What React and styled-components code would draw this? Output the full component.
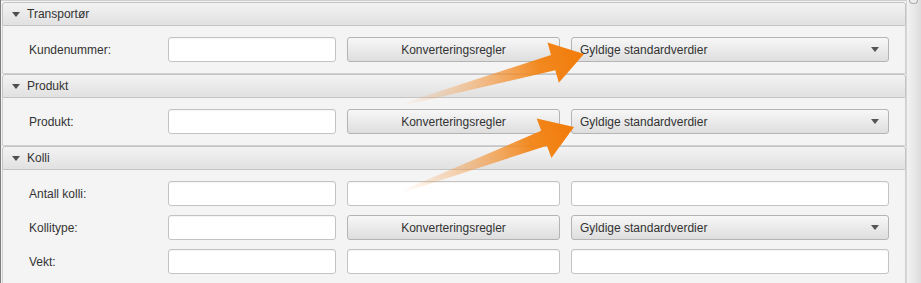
import React from 'react';
import styled, { createGlobalStyle } from 'styled-components';

const Global = createGlobalStyle`
  html, body { margin: 0; padding: 0; background: #f4f4f4; }
  body { font-family: "Liberation Sans", Arial, sans-serif; font-size: 12px; color: #333; }
  * { box-sizing: border-box; }
`;

const Frame = styled.div`
  position: relative;
  display: flex;
  width: 921px;
  height: 283px;
  overflow: hidden;
  background: #f4f4f4;
  border-left: 1px solid #7d7d7d;
`;

const Main = styled.div`
  flex: 1;
  border-top: 1px solid #cfcfcf;
  padding: 1px 0 0 1px;
  background: #f4f4f4;
`;

const Section = styled.section`
  display: flex;
  flex-direction: column;
`;

const Title = styled.div`
  height: 24px;
  display: flex;
  align-items: center;
  gap: 7px;
  padding-left: 9px;
  border: 1px solid #c4c4c4;
  border-radius: 3px 3px 0 0;
  background: linear-gradient(#f3f3f3, #e1e1e1);
  color: #333;
`;

const Chevron = styled.svg`
  width: 8px;
  height: 5px;
  flex: none;
`;

const Body = styled.div`
  display: grid;
  grid-template-columns: 128px 168px 213px 318px;
  grid-auto-rows: 25px;
  column-gap: 11px;
  row-gap: 9px;
  align-items: center;
  padding: 11px 16px 11px 26px;
  background: #f4f4f4;
  border: 1px solid #d0d0d0;
  border-top: none;
`;

const Label = styled.span`
  color: #333;
`;

const Field = styled.div`
  height: 25px;
  background: #fff;
  border: 1px solid #c3c3c3;
  border-radius: 3px;
  box-shadow: inset 0 1px 1px rgba(0, 0, 0, 0.05);
`;

const Button = styled.div`
  height: 25px;
  display: flex;
  align-items: center;
  justify-content: ${p => (p.$combo ? 'space-between' : 'center')};
  padding: ${p => (p.$combo ? '0 9px 0 8px' : '0')};
  border: 1px solid #b4b4b4;
  border-radius: 3px;
  background: linear-gradient(#f7f7f7, #dedede);
  color: #333;
`;

const ScrollBar = styled.div`
  width: 15px;
  display: flex;
  flex-direction: column;
  border-left: 1px solid #d6d6d6;
  background: linear-gradient(to right, #f2f2f2, #e6e6e6 60%, #dcdcdc);
`;

const Thumb = styled.div`
  height: 4px;
  margin: 0 3px 0 2px;
  background: #ececec;
  border: 1px solid #a9a9a9;
  border-top: none;
  border-radius: 0 0 4px 4px;
`;

const Overlay = styled.svg`
  position: absolute;
  left: 0;
  top: 0;
  pointer-events: none;
`;

const Tri = ({ color = '#4f4f4f' }) => (
  <Chevron viewBox="0 0 8 5">
    <polygon points="0,0 8,0 4,5" fill={color} />
  </Chevron>
);

const Combo = () => (
  <Button $combo>
    <span>Gyldige standardverdier</span>
    <Tri color="#555" />
  </Button>
);

const Rules = () => <Button>Konverteringsregler</Button>;

function arrowPoints(tail, tip, L = 32, W = 21, s = 8, t = 1) {
  const dx = tip[0] - tail[0];
  const dy = tip[1] - tail[1];
  const len = Math.hypot(dx, dy);
  const d = [dx / len, dy / len];
  const n = [-d[1], d[0]];
  const B = [tip[0] - d[0] * L, tip[1] - d[1] * L];
  const p = (c, k) => [c[0] + n[0] * k, c[1] + n[1] * k];
  const pts = [p(tail, t), p(B, s), p(B, W), tip, p(B, -W), p(B, -s), p(tail, -t)];
  return pts.map(q => q.map(v => v.toFixed(1)).join(',')).join(' ');
}

const arrows = [
  { id: 'a1', tail: [400, 105], tip: [583, 54] },
  { id: 'a2', tail: [400, 192], tip: [573, 127] },
];

export default function App() {
  return (
    <>
      <Global />
      <Frame>
        <Main>
          <Section>
            <Title><Tri />Transportør</Title>
            <Body>
              <Label>Kundenummer:</Label>
              <Field />
              <Rules />
              <Combo />
            </Body>
          </Section>
          <Section>
            <Title><Tri />Produkt</Title>
            <Body>
              <Label>Produkt:</Label>
              <Field />
              <Rules />
              <Combo />
            </Body>
          </Section>
          <Section>
            <Title><Tri />Kolli</Title>
            <Body>
              <Label>Antall kolli:</Label>
              <Field />
              <Field />
              <Field />
              <Label>Kollitype:</Label>
              <Field />
              <Rules />
              <Combo />
              <Label>Vekt:</Label>
              <Field />
              <Field />
              <Field />
            </Body>
          </Section>
        </Main>
        <ScrollBar>
          <Thumb />
        </ScrollBar>
        <Overlay width="921" height="283" viewBox="0 0 921 283">
          <defs>
            {arrows.map(a => (
              <linearGradient
                key={a.id}
                id={a.id}
                gradientUnits="userSpaceOnUse"
                x1={a.tail[0]}
                y1={a.tail[1]}
                x2={a.tip[0]}
                y2={a.tip[1]}
              >
                <stop offset="0" stopColor="#f5a55a" stopOpacity="0" />
                <stop offset="0.35" stopColor="#f39a45" stopOpacity="0.45" />
                <stop offset="0.75" stopColor="#f2861a" stopOpacity="0.97" />
                <stop offset="1" stopColor="#f17b08" stopOpacity="1" />
              </linearGradient>
            ))}
          </defs>
          {arrows.map(a => (
            <polygon key={a.id} points={arrowPoints(a.tail, a.tip)} fill={`url(#${a.id})`} />
          ))}
        </Overlay>
      </Frame>
    </>
  );
}
